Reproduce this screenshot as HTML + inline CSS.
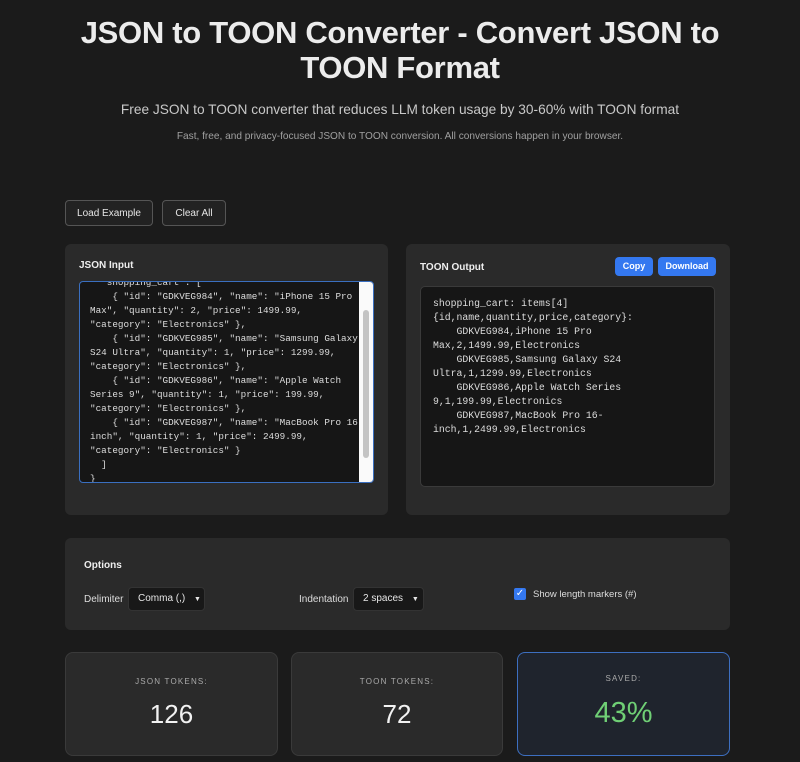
<!DOCTYPE html>
<html><head><meta charset="utf-8"><style>
*{box-sizing:border-box;margin:0;padding:0}
body{width:800px;height:762px;overflow:hidden;background:#1b1b1b;color:#e8e8e8;font-family:"Liberation Sans",sans-serif;position:relative}
.abs{position:absolute}
h1{position:absolute;left:0;width:800px;top:15px;text-align:center;font-size:31px;line-height:35px;font-weight:bold;color:#ececec;letter-spacing:-0.3px}
.sub{top:102px;width:800px;text-align:center;font-size:13.7px;color:#c8c8c8}
.sub2{top:131px;width:800px;text-align:center;font-size:10.1px;color:#a0a0a0}
.btn{border:1px solid #555;border-radius:4px;background:#222;color:#e6e6e6;font-size:10px;text-align:center;line-height:24px;height:26px}
.panel{background:#2a2a2a;border-radius:6px}
.lbl{font-size:10px;font-weight:bold;color:#eee}
.code{font-family:"Liberation Mono",monospace;font-size:9.8px;line-height:14px;color:#ddd;white-space:pre;background:#161616}
.blue{background:#3478f0;border-radius:4px;color:#fff;font-size:9px;font-weight:bold;text-align:center;line-height:19px;height:19px}
.sel{background:#181818;border:1px solid #333;border-radius:4px;font-size:10px;color:#e6e6e6;line-height:22px;height:24px;padding-left:9px}
.card{background:#2a2a2a;border:1px solid #3a3a3a;border-radius:8px;text-align:center}
.cl{font-size:8px;letter-spacing:1.2px;color:#aaa;position:absolute;width:100%}
.cn{font-size:26px;color:#f2f2f2;position:absolute;width:100%}
</style></head><body>
<h1>JSON to TOON Converter - Convert JSON to<br>TOON Format</h1>
<div class="abs sub">Free JSON to TOON converter that reduces LLM token usage by 30-60% with TOON format</div>
<div class="abs sub2">Fast, free, and privacy-focused JSON to TOON conversion. All conversions happen in your browser.</div>
<div class="abs btn" style="left:65px;top:200px;width:88px;line-height:26px">Load Example</div>
<div class="abs btn" style="left:162px;top:200px;width:64px;line-height:26px">Clear All</div>

<div class="abs panel" style="left:65px;top:244px;width:323px;height:271px"></div>
<div class="abs lbl" style="left:79px;top:260px">JSON Input</div>
<div class="abs code" style="left:79px;top:281px;width:295px;height:202px;border:1px solid #3a6fc0;border-radius:4px;overflow:hidden;padding:0 0 0 10px;font-size:9.3px"><div style="margin-top:-6px">  "shopping_cart": [
    { "id": "GDKVEG984", "name": "iPhone 15 Pro
Max", "quantity": 2, "price": 1499.99,
"category": "Electronics" },
    { "id": "GDKVEG985", "name": "Samsung Galaxy
S24 Ultra", "quantity": 1, "price": 1299.99,
"category": "Electronics" },
    { "id": "GDKVEG986", "name": "Apple Watch
Series 9", "quantity": 1, "price": 199.99,
"category": "Electronics" },
    { "id": "GDKVEG987", "name": "MacBook Pro 16-
inch", "quantity": 1, "price": 2499.99,
"category": "Electronics" }
  ]
}</div>
<div style="position:absolute;right:0;top:0;width:14px;height:100%;background:#fafafa"><div style="position:absolute;left:4px;top:28px;width:6px;height:148px;background:#c4c4c4;border-radius:3px"></div></div></div>

<div class="abs panel" style="left:406px;top:244px;width:324px;height:271px"></div>
<div class="abs lbl" style="left:420px;top:262px">TOON Output</div>
<div class="abs blue" style="left:615px;top:257px;width:38px">Copy</div>
<div class="abs blue" style="left:658px;top:257px;width:58px">Download</div>
<div class="abs code" style="left:420px;top:286px;width:295px;height:201px;border:1px solid #3a3a3a;border-radius:5px;padding:10px 0 0 12px">shopping_cart: items[4]
{id,name,quantity,price,category}:
    GDKVEG984,iPhone 15 Pro
Max,2,1499.99,Electronics
    GDKVEG985,Samsung Galaxy S24
Ultra,1,1299.99,Electronics
    GDKVEG986,Apple Watch Series
9,1,199.99,Electronics
    GDKVEG987,MacBook Pro 16-
inch,1,2499.99,Electronics</div>

<div class="abs panel" style="left:65px;top:538px;width:665px;height:92px"></div>
<div class="abs lbl" style="left:84px;top:560px">Options</div>
<div class="abs" style="left:84px;top:594px;font-size:10px;color:#ddd">Delimiter</div>
<div class="abs sel" style="left:128px;top:587px;width:77px">Comma (,) <span style="font-size:7px;margin-left:6px">▼</span></div>
<div class="abs" style="left:299px;top:594px;font-size:10px;color:#ddd">Indentation</div>
<div class="abs sel" style="left:353px;top:587px;width:71px">2 spaces <span style="font-size:7px;margin-left:6px">▼</span></div>
<div class="abs" style="left:514px;top:588px;width:12px;height:12px;background:#3478f0;border-radius:2px;color:#fff;font-size:10px;line-height:12px;text-align:center">✓</div>
<div class="abs" style="left:533px;top:589px;font-size:9.5px;color:#ddd">Show length markers (#)</div>

<div class="abs card" style="left:65px;top:652px;width:213px;height:104px"><div class="cl" style="top:24px">JSON TOKENS:</div><div class="cn" style="top:46px">126</div></div>
<div class="abs card" style="left:291px;top:652px;width:212px;height:104px"><div class="cl" style="top:24px">TOON TOKENS:</div><div class="cn" style="top:46px">72</div></div>
<div class="abs card" style="left:517px;top:652px;width:213px;height:104px;background:#1f242d;border-color:#3d6fc0"><div class="cl" style="top:21px">SAVED:</div><div class="cn" style="top:44px;color:#6fcf75;font-size:29px">43%</div></div>
</body></html>
